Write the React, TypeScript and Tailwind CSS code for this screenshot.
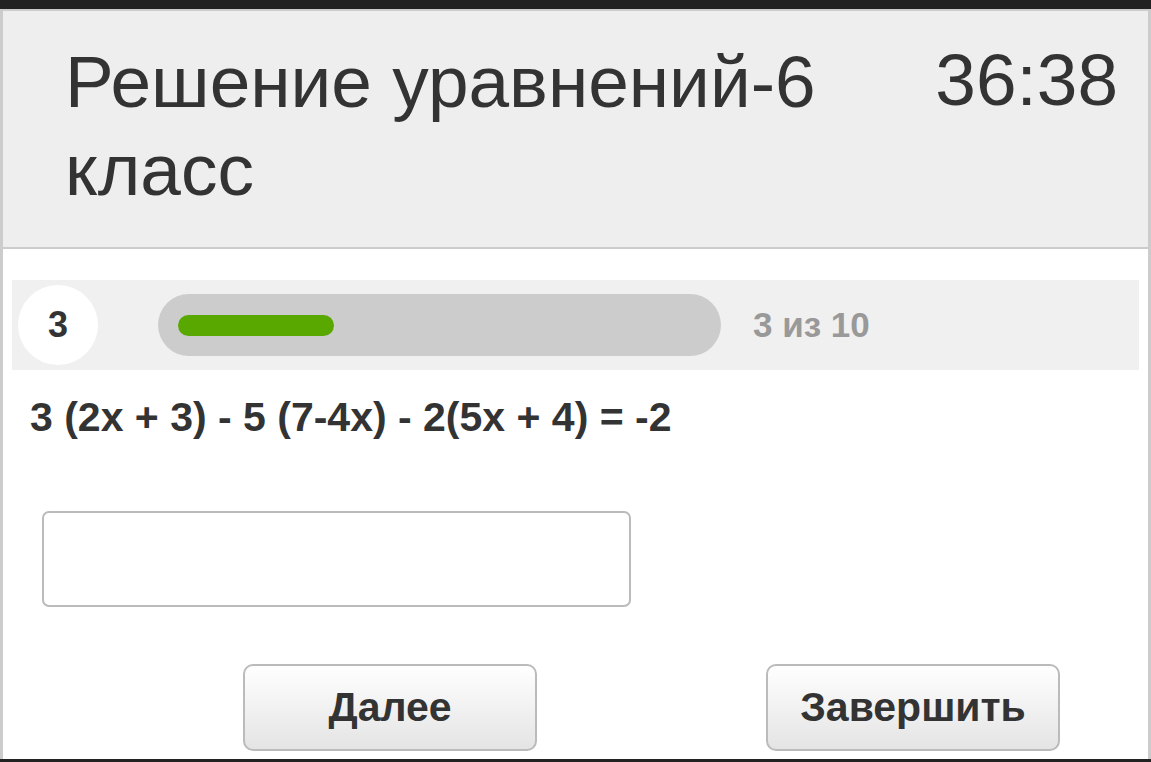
export default function App() {
  const current = 3;
  const total = 10;

  return (
    <div className="h-[762px] w-[1151px] flex flex-col bg-[#222] font-['Liberation_Sans',Arial,sans-serif] text-[#333]">
      <div className="h-[9px] shrink-0" />

      <div className="flex-1 flex flex-col bg-white border-x-[3px] border-t-2 border-[#ccc] overflow-hidden">
        {/* header */}
        <div className="h-[238px] shrink-0 bg-[#eee] border-b-2 border-[#ccc] flex justify-between pl-[62px] pr-[30px] pt-[27px]">
          <h1 className="text-[73px] leading-[88px] w-[790px]">
            Решение уравнений-6 класс
          </h1>
          <div className="text-[73px] leading-[88px] -mt-[2px]">36:38</div>
        </div>

        {/* progress */}
        <div className="mx-[9px] mt-[31px] h-[90px] shrink-0 bg-[#f0f0f0] flex items-center">
          <div className="ml-[6px] w-[80px] h-[80px] rounded-full bg-white flex items-center justify-center text-[36px] font-bold">
            {current}
          </div>
          <div className="ml-[60px] w-[563px] h-[62px] rounded-full bg-[#ccc] flex items-center pl-[20px]">
            <div className="w-[156px] h-[21px] rounded-full bg-[#58a800]" />
          </div>
          <div className="ml-[32px] text-[35px] font-bold text-[#999]">
            {current} из {total}
          </div>
        </div>

        {/* question */}
        <div className="mt-[24px] pl-[27px] text-[41px] font-bold leading-[47px]">
          3 (2x + 3) - 5 (7-4x) - 2(5x + 4) = -2
        </div>

        <input
          type="text"
          className="mt-[70px] ml-[39px] w-[589px] h-[96px] border-2 border-[#bbb] rounded-[7px] bg-white outline-none px-3 text-[36px]"
        />

        <div className="mt-[57px] flex">
          <button className="ml-[240px] w-[294px] h-[87px] rounded-[10px] border-2 border-[#bbb] bg-gradient-to-b from-white to-[#e4e4e4] text-[41px] font-bold text-[#333]">
            Далее
          </button>
          <button className="ml-[229px] w-[294px] h-[87px] rounded-[10px] border-2 border-[#bbb] bg-gradient-to-b from-white to-[#e4e4e4] text-[41px] font-bold text-[#333]">
            Завершить
          </button>
        </div>
      </div>

      <div className="h-[3px] shrink-0" />
    </div>
  );
}
